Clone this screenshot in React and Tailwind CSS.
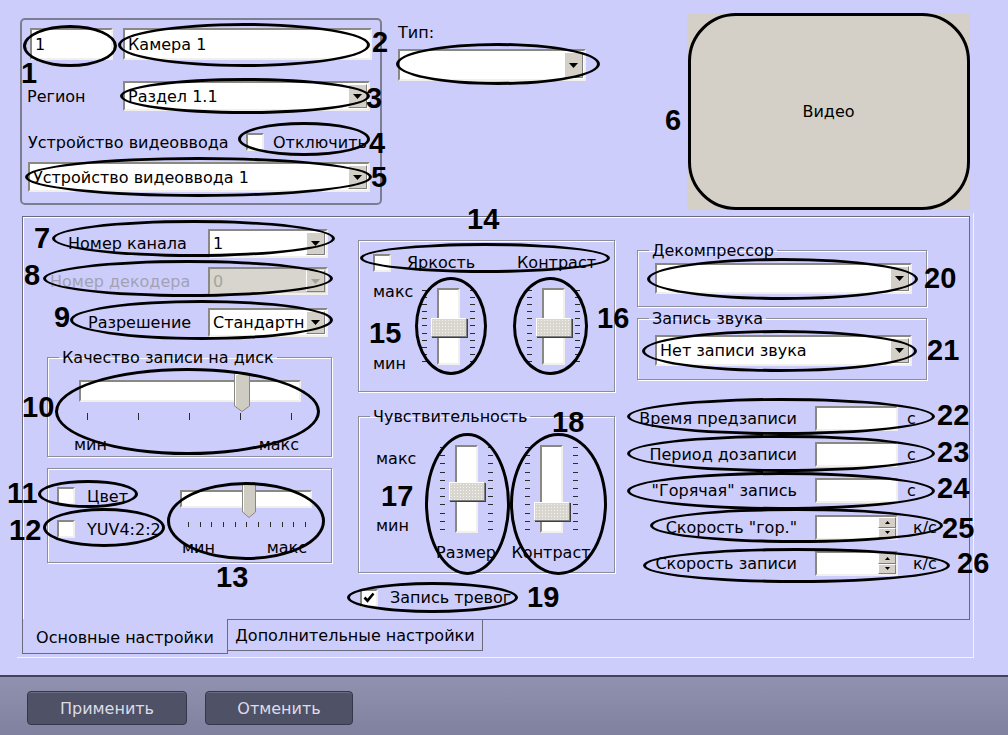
import React from 'react';

const sunken = 'border-2 border-t-[#8a8882] border-l-[#8a8882] border-b-[#f2f0ec] border-r-[#f2f0ec]';
const raised = 'border border-t-white border-l-white border-b-[#7f7f7f] border-r-[#7f7f7f]';
const etched = 'border border-[#8c8c9a] shadow-[1px_1px_0_#ffffff,inset_1px_1px_0_#ffffff]';

function Arrow({ disabled }) {
    return (
        <span className={`w-[19px] m-px bg-[#d4d0c8] ${raised} flex items-center justify-center shrink-0`}>
            <svg width="9" height="5" viewBox="0 0 9 5">
                <path d="M0 0h9L4.5 5z" fill={disabled ? '#a3a199' : '#000'} />
            </svg>
        </span>
    );
}

function Combo({ className, text, disabled }) {
    return (
        <div className={`flex items-stretch ${sunken} ${disabled ? 'bg-[#d8d5ce] text-[#a6a49c]' : 'bg-white'} ${className}`}>
            <span className="flex-1 min-w-0 overflow-hidden whitespace-nowrap pl-[3px] flex items-center">{text}</span>
            <Arrow disabled={disabled} />
        </div>
    );
}

function Field({ className, text }) {
    return (
        <div className={`bg-white ${sunken} flex items-center pl-[3px] ${className}`}>{text}</div>
    );
}

function Spin() {
    return (
        <div className={`w-[83px] h-[25px] bg-white ${sunken} flex justify-end`}>
            <div className="w-[18px] flex flex-col">
                <span className={`flex-1 bg-[#d4d0c8] ${raised} flex items-center justify-center`}>
                    <svg width="5" height="3" viewBox="0 0 5 3"><path d="M0 3h5L2.5 0z" fill="#000" /></svg>
                </span>
                <span className={`flex-1 bg-[#d4d0c8] ${raised} flex items-center justify-center`}>
                    <svg width="5" height="3" viewBox="0 0 5 3"><path d="M0 0h5L2.5 3z" fill="#000" /></svg>
                </span>
            </div>
        </div>
    );
}

function Check({ checked }) {
    return (
        <span className={`w-[18px] h-[18px] bg-white ${sunken} flex items-center justify-center shrink-0`}>
            {checked && (
                <svg width="12" height="11" viewBox="0 0 12 11">
                    <path d="M1.5 5.5l3 3.2L10.5 1.5" stroke="#000" strokeWidth="2.6" fill="none" />
                </svg>
            )}
        </span>
    );
}

function Ticks({ n, vertical }) {
    return Array.from({ length: n }, (_, i) => (
        <span key={i} className={vertical ? 'block w-[5px] h-px bg-[#2b2b2b]' : 'block w-px h-full bg-[#2b2b2b]'} />
    ));
}

function HThumb({ w, h }) {
    return (
        <svg width={w} height={h} viewBox={`0 0 ${w} ${h}`}>
            <path d={`M0.5 0.5H${w - 0.5}V${h - 6}L${w / 2} ${h - 0.5}L0.5 ${h - 6}Z`} fill="#cfccc4" stroke="#8a8882" />
            <path d={`M1.5 ${h - 6.5}V1.5H${w - 1.5}`} stroke="#fff" fill="none" />
        </svg>
    );
}

function VSlider({ trackClass, thumbClass }) {
    return (
        <div className={`relative flex w-[53px] ${trackClass}`}>
            <div className="w-[5px] flex flex-col justify-between pt-[2px] pb-[3px]"><Ticks n={11} vertical /></div>
            <div className={`ml-[10px] w-[23px] bg-white ${sunken}`} />
            <div className="ml-[10px] w-[5px] flex flex-col justify-between pt-[2px] pb-[3px]"><Ticks n={11} vertical /></div>
            <div className={`absolute left-[9px] w-[36px] h-[19px] bg-[#d9d6cf] bg-[radial-gradient(#f4f2ee_0.8px,transparent_0.9px)] bg-[length:3px_3px] ${raised} shadow-[1px_1px_0_#404040] ${thumbClass}`} />
        </div>
    );
}

const ellipses = [
    'left-[23px] top-[25px] w-[94px] h-[42px]',
    'left-[118px] top-[23px] w-[252px] h-[44px]',
    'left-[120px] top-[78px] w-[250px] h-[36px]',
    'left-[238px] top-[122px] w-[132px] h-[34px]',
    'left-[25px] top-[157px] w-[347px] h-[40px]',
    'left-[396px] top-[43px] w-[204px] h-[42px]',
    'left-[52px] top-[220px] w-[283px] h-[37px]',
    'left-[43px] top-[260px] w-[290px] h-[37px]',
    'left-[70px] top-[300px] w-[263px] h-[40px]',
    'left-[55px] top-[368px] w-[265px] h-[87px]',
    'left-[38px] top-[480px] w-[100px] h-[28px]',
    'left-[43px] top-[508px] w-[122px] h-[39px]',
    'left-[167px] top-[482px] w-[158px] h-[78px]',
    'left-[360px] top-[243px] w-[250px] h-[30px]',
    'left-[415px] top-[277px] w-[72px] h-[98px]',
    'left-[513px] top-[277px] w-[75px] h-[98px]',
    'left-[425px] top-[433px] w-[85px] h-[142px]',
    'left-[510px] top-[433px] w-[97px] h-[142px]',
    'left-[347px] top-[582px] w-[171px] h-[31px]',
    'left-[647px] top-[258px] w-[271px] h-[42px]',
    'left-[642px] top-[330px] w-[275px] h-[42px]',
    'left-[627px] top-[398px] w-[308px] h-[37px]',
    'left-[627px] top-[435px] w-[308px] h-[37px]',
    'left-[627px] top-[472px] w-[308px] h-[38px]',
    'left-[650px] top-[508px] w-[293px] h-[35px]',
    'left-[643px] top-[548px] w-[307px] h-[35px]',
];

const numbers = [
    ['1', 'left-[21px] top-[59px]'],
    ['2', 'left-[372px] top-[28px]'],
    ['3', 'left-[366px] top-[84px]'],
    ['4', 'left-[369px] top-[129px]'],
    ['5', 'left-[371px] top-[163px]'],
    ['6', 'left-[665px] top-[106px]'],
    ['7', 'left-[34px] top-[224px]'],
    ['8', 'left-[24px] top-[261px]'],
    ['9', 'left-[54px] top-[303px]'],
    ['10', 'left-[22px] top-[393px]'],
    ['11', 'left-[7px] top-[479px]'],
    ['12', 'left-[9px] top-[516px]'],
    ['13', 'left-[216px] top-[563px]'],
    ['14', 'left-[467px] top-[205px]'],
    ['15', 'left-[369px] top-[319px]'],
    ['16', 'left-[597px] top-[304px]'],
    ['17', 'left-[381px] top-[482px]'],
    ['18', 'left-[552px] top-[408px]'],
    ['19', 'left-[527px] top-[583px]'],
    ['20', 'left-[924px] top-[264px]'],
    ['21', 'left-[927px] top-[336px]'],
    ['22', 'left-[937px] top-[401px]'],
    ['23', 'left-[937px] top-[438px]'],
    ['24', 'left-[937px] top-[474px]'],
    ['25', 'left-[942px] top-[514px]'],
    ['26', 'left-[957px] top-[549px]'],
];

const timeRows = [
    { label: 'Время предзаписи', gap: 'mt-[26px]' },
    { label: 'Период дозаписи', gap: 'mt-[11px]' },
    { label: '"Горячая" запись', gap: 'mt-[11px]' },
    { label: 'Скорость "гор."', gap: 'mt-[12px]', spin: true },
    { label: 'Скорость записи', gap: 'mt-[11px]', spin: true },
];

export default function App() {
    return (
        <div className="relative w-[1008px] h-[735px] overflow-hidden bg-[#cdcdfb] text-black text-[16px] leading-[19px] font-['DejaVu_Sans',sans-serif] flex flex-col">
            {/* верхняя часть */}
            <div className="flex items-start h-[213px] shrink-0">
                <div className="ml-[20px] mt-[18px] w-[362px] h-[187px] border-2 border-[#7c7d90] rounded-[5px] pl-[8px] pt-[8px]">
                    <div className="flex gap-[10px]">
                        <Field className="w-[83px] h-[32px]" text="1" />
                        <Field className="w-[249px] h-[32px]" text="Камера 1" />
                    </div>
                    <div className="mt-[21px] flex items-center h-[30px]">
                        <span className="-ml-[3px] w-[96px]">Регион</span>
                        <Combo className="w-[247px] h-[30px]" text="Раздел 1.1" />
                    </div>
                    <div className="mt-[19px] flex items-center h-[24px]">
                        <span className="-ml-[2px] w-[218px] whitespace-nowrap">Устройство видеоввода</span>
                        <Check />
                        <span className="ml-[9px]">Отключить</span>
                    </div>
                    <Combo className="mt-[8px] -ml-[2px] w-[342px] h-[30px]" text="Устройство видеоввода 1" />
                </div>

                <div className="ml-[16px] mt-[23px] flex flex-col">
                    <span>Тип:</span>
                    <Combo className="mt-[7px] w-[188px] h-[32px]" text="" />
                </div>

                <div className="ml-[101px] mt-[13px] w-[283px] h-[197px] bg-[#d4d0c8] flex items-center justify-center">
                    Видео
                </div>
            </div>

            {/* вкладки */}
            <div className="ml-[17px] w-[957px] h-[445px] pl-[5px] pt-[3px] border-r border-b border-[#f3f3ff] shrink-0 flex flex-col">
                <div className="h-[404px] w-[948px] border border-[#6a6a7a] shadow-[inset_1px_1px_0_#ffffff] flex">
                    {/* левая колонка */}
                    <div className="w-[335px] shrink-0 flex flex-col">
                        <div className="mt-[12px] h-[29px] flex items-center">
                            <span className="w-[185px] pl-[45px] whitespace-nowrap">Номер канала</span>
                            <Combo className="w-[120px] h-[29px]" text="1" />
                        </div>
                        <div className="mt-[9px] h-[28px] flex items-center">
                            <span className="w-[185px] pl-[27px] whitespace-nowrap text-[#a2a2b4]">Номер декодера</span>
                            <Combo className="w-[120px] h-[28px]" text="0" disabled />
                        </div>
                        <div className="mt-[13px] h-[29px] flex items-center">
                            <span className="w-[185px] pl-[65px] whitespace-nowrap">Разрешение</span>
                            <Combo className="w-[120px] h-[29px]" text="Стандартн" />
                        </div>

                        <fieldset className={`mt-[11px] ml-[24px] w-[285px] h-[109px] ${etched} pl-[31px]`}>
                            <legend className="ml-[-20px] px-[3px] whitespace-nowrap">Качество записи на диск</legend>
                            <div className="relative mt-[13px] w-[222px] h-[22px]">
                                <div className={`w-full h-full bg-white ${sunken}`} />
                                <div className="absolute left-[155px] top-[-7px]"><HThumb w={16} h={39} /></div>
                            </div>
                            <div className="mt-[11px] ml-[8px] w-[205px] h-[7px] flex justify-between"><Ticks n={5} /></div>
                            <div className="mt-[15px] -ml-[5px] w-[225px] flex justify-between">
                                <span>мин</span>
                                <span>макс</span>
                            </div>
                        </fieldset>

                        <div className={`mt-[11px] ml-[24px] w-[285px] h-[95px] ${etched} flex`}>
                            <div className="w-[132px] pl-[9px] pt-[18px] flex flex-col gap-[15px]">
                                <div className="flex items-center h-[18px]">
                                    <Check />
                                    <span className="ml-[12px]">Цвет</span>
                                </div>
                                <div className="flex items-center h-[18px]">
                                    <Check />
                                    <span className="ml-[12px] whitespace-nowrap">YUV4:2:2</span>
                                </div>
                            </div>
                            <div className="pt-[21px]">
                                <div className="relative w-[132px] h-[18px]">
                                    <div className={`w-full h-full bg-white ${sunken}`} />
                                    <div className="absolute left-[62px] top-[-7px]"><HThumb w={14} h={35} /></div>
                                </div>
                                <div className="mt-[14px] ml-[8px] w-[118px] h-[5px] flex justify-between"><Ticks n={11} /></div>
                                <div className="mt-[11px] ml-[2px] w-[125px] flex justify-between">
                                    <span>мин</span>
                                    <span>макс</span>
                                </div>
                            </div>
                        </div>
                    </div>

                    {/* средняя колонка */}
                    <div className="w-[257px] shrink-0 flex flex-col">
                        <div className={`mt-[23px] h-[152px] ${etched} pl-[14px] pt-[12px]`}>
                            <div className="flex items-center h-[19px]">
                                <Check />
                                <span className="ml-[16px] w-[110px]">Яркость</span>
                                <span>Контраст</span>
                            </div>
                            <div className="mt-[16px] flex items-start">
                                <div className="w-[49px] h-[91px] -mt-[6px] flex flex-col justify-between">
                                    <span>макс</span>
                                    <span>мин</span>
                                </div>
                                <VSlider trackClass="h-[77px]" thumbClass="top-[30px]" />
                                <div className="ml-[52px]">
                                    <VSlider trackClass="h-[77px]" thumbClass="top-[30px]" />
                                </div>
                            </div>
                        </div>

                        <fieldset className={`mt-[15px] h-[166px] ${etched} pl-[17px]`}>
                            <legend className="ml-[-6px] px-[3px] whitespace-nowrap">Чувствительность</legend>
                            <div className="mt-[19px] flex items-start">
                                <div className="w-[55px] pt-[4px] flex flex-col gap-[48px]">
                                    <span>макс</span>
                                    <span>мин</span>
                                </div>
                                <div className="w-[70px] flex flex-col items-center">
                                    <VSlider trackClass="h-[88px]" thumbClass="top-[37px]" />
                                    <span className="mt-[10px]">Размер</span>
                                </div>
                                <div className="ml-[10px] w-[80px] flex flex-col items-center">
                                    <VSlider trackClass="h-[88px]" thumbClass="top-[57px]" />
                                    <span className="mt-[10px]">Контраст</span>
                                </div>
                            </div>
                        </fieldset>

                        <div className="mt-[15px] ml-[2px] h-[19px] flex items-center">
                            <Check checked />
                            <span className="ml-[12px]">Запись тревог</span>
                        </div>
                    </div>

                    {/* правая колонка */}
                    <div className="flex-1 flex flex-col">
                        <fieldset className={`mt-[24px] ml-[22px] w-[290px] h-[66px] ${etched} pl-[17px]`}>
                            <legend className="ml-[-6px] px-[3px]">Декомпрессор</legend>
                            <Combo className="mt-[3px] w-[257px] h-[31px]" text="" />
                        </fieldset>
                        <fieldset className={`mt-[2px] ml-[22px] w-[290px] h-[71px] ${etched} pl-[17px]`}>
                            <legend className="ml-[-6px] px-[3px]">Запись звука</legend>
                            <Combo className="mt-[7px] w-[257px] h-[31px]" text="Нет записи звука" />
                        </fieldset>

                        {timeRows.map((r) => (
                            <div key={r.label} className={`${r.gap} h-[25px] flex items-center`}>
                                <span className="w-[182px] text-right whitespace-nowrap">{r.label}</span>
                                <div className="ml-[18px]">
                                    {r.spin ? <Spin /> : <Field className="w-[83px] h-[25px]" text="" />}
                                </div>
                                <span className={r.spin ? 'ml-[15px]' : 'ml-[9px]'}>{r.spin ? 'к/с' : 'с'}</span>
                            </div>
                        ))}
                    </div>
                </div>

                <div className="flex items-start -mt-px">
                    <div className="relative z-10 w-[206px] h-[35px] pt-[2px] bg-[#cdcdfb] border-l border-r border-b border-[#6a6a7a] flex items-center justify-center whitespace-nowrap">
                        Основные настройки
                    </div>
                    <div className="mt-px w-[255px] h-[31px] border-r border-b border-[#6a6a7a] flex items-center justify-center whitespace-nowrap">
                        Дополнительные настройки
                    </div>
                </div>
            </div>

            {/* нижняя панель */}
            <div className="mt-auto h-[60px] shrink-0 border-t-2 border-[#41425a] bg-gradient-to-b from-[#9092b0] to-[#7f819f] flex items-start pl-[27px] pt-[14px] gap-[18px]">
                <button className="w-[160px] h-[34px] rounded-[4px] bg-[#4f5167] border border-[#35364a] text-[#dcdce6] shadow-[inset_0_1px_0_#6a6c84]">
                    Применить
                </button>
                <button className="w-[148px] h-[34px] rounded-[4px] bg-[#4f5167] border border-[#35364a] text-[#dcdce6] shadow-[inset_0_1px_0_#6a6c84]">
                    Отменить
                </button>
            </div>

            {/* разметка поверх скриншота */}
            <div className="absolute left-[688px] top-[13px] w-[282px] h-[197px] rounded-[48px] border-[3px] border-black pointer-events-none" />
            {ellipses.map((c) => (
                <div key={c} className={`absolute rounded-[50%] border-[3px] border-black pointer-events-none ${c}`} />
            ))}
            {numbers.map(([t, c]) => (
                <span key={t} className={`absolute font-['Liberation_Sans',sans-serif] font-bold text-[29px] leading-none ${c}`}>
                    {t}
                </span>
            ))}
        </div>
    );
}
